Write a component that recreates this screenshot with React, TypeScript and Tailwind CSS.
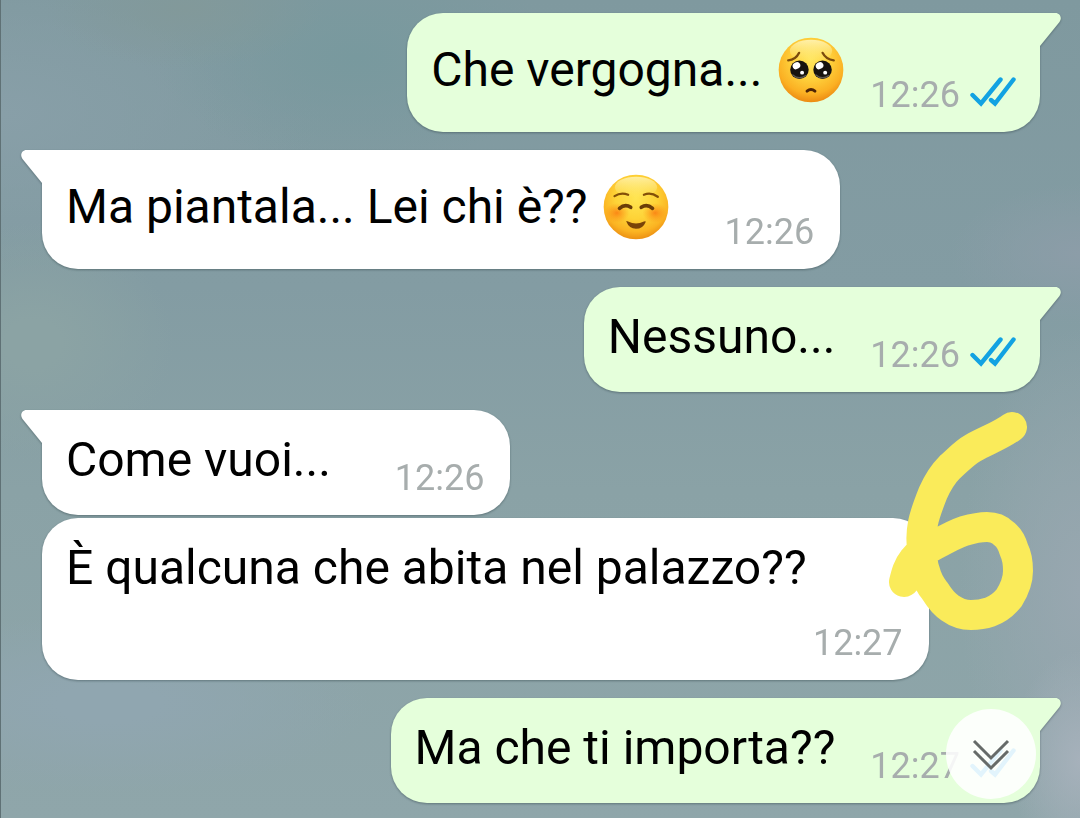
import type { ReactNode } from "react";

type Side = "in" | "out";

function PleadingFace() {
  return (
    <svg viewBox="0 0 200 200" className="size-[66px] shrink-0" role="img" aria-label="Pleading face">
      <defs>
        <radialGradient id="plead" cx="0.5" cy="0.34" r="0.66">
          <stop offset="0" stopColor="#ffe55c" />
          <stop offset="0.45" stopColor="#fed13c" />
          <stop offset="0.8" stopColor="#fbb023" />
          <stop offset="1" stopColor="#ec8a12" />
        </radialGradient>
        <linearGradient id="pleadTop" x1="0" y1="0" x2="0" y2="1">
          <stop offset="0" stopColor="#fffbd0" stopOpacity="0.75" />
          <stop offset="1" stopColor="#fff7a0" stopOpacity="0" />
        </linearGradient>
      </defs>
      <circle cx="100" cy="100" r="98" fill="url(#plead)" />
      <ellipse cx="100" cy="42" rx="64" ry="34" fill="url(#pleadTop)" />
      <path d="M31 71Q54 69 64 48M135 48Q145 68 169 71" fill="none" stroke="#7a4a0c" strokeWidth="7" strokeLinecap="round" />
      <g fill="#17130f">
        <circle cx="65" cy="99" r="28" />
        <circle cx="135" cy="99" r="28" />
      </g>
      <path d="M45 115Q63 131 84 117M115 115Q133 131 154 117" fill="none" stroke="#5c5751" strokeWidth="4" strokeLinecap="round" />
      <g fill="#fff">
        <ellipse cx="56" cy="87" rx="12" ry="10" transform="rotate(-30 56 87)" />
        <ellipse cx="126" cy="87" rx="12" ry="10" transform="rotate(-30 126 87)" />
        <circle cx="73" cy="108" r="6" />
        <circle cx="143" cy="108" r="6" />
      </g>
      <path d="M88 164Q100 154 112 164" fill="none" stroke="#4e2406" strokeWidth="9" strokeLinecap="round" />
    </svg>
  );
}

function SmilingFace() {
  return (
    <svg viewBox="0 0 200 200" className="size-[66px] shrink-0" role="img" aria-label="Smiling face">
      <defs>
        <radialGradient id="smile" cx="0.5" cy="0.36" r="0.64">
          <stop offset="0" stopColor="#ffe552" />
          <stop offset="0.5" stopColor="#fed337" />
          <stop offset="0.82" stopColor="#fbb322" />
          <stop offset="1" stopColor="#ec9013" />
        </radialGradient>
        <radialGradient id="blush">
          <stop offset="0" stopColor="#fa780f" stopOpacity="0.8" />
          <stop offset="1" stopColor="#fb8d12" stopOpacity="0" />
        </radialGradient>
        <linearGradient id="smileTop" x1="0" y1="0" x2="0" y2="1">
          <stop offset="0" stopColor="#fffbd0" stopOpacity="0.7" />
          <stop offset="1" stopColor="#fff7a0" stopOpacity="0" />
        </linearGradient>
      </defs>
      <circle cx="100" cy="100" r="98" fill="url(#smile)" />
      <ellipse cx="100" cy="40" rx="64" ry="32" fill="url(#smileTop)" />
      <ellipse cx="42" cy="118" rx="38" ry="30" fill="url(#blush)" />
      <ellipse cx="158" cy="118" rx="38" ry="30" fill="url(#blush)" />
      <path d="M35 67Q55 54 76 63M124 63Q145 54 166 69" fill="none" stroke="#845008" strokeWidth="7" strokeLinecap="round" />
      <path d="M50 104Q67 89 84 101M116 101Q133 89 150 104" fill="none" stroke="#6b3d08" strokeWidth="11" strokeLinecap="round" />
      <path d="M71 145Q69 141 76 144Q100 156 124 144Q131 141 129 146Q121 166 100 166Q79 166 71 145Z" fill="#7a4308" />
    </svg>
  );
}

function Ticks() {
  return (
    <svg viewBox="0 0 46 30" className="mb-[9px] ml-[10px] h-[30px] w-[46px]" role="img" aria-label="Read">
      <path d="M2.500 18L11 26.500L30.500 2.500M21 23L25 26.500L43.500 2.500" fill="none" stroke="#12a2e2" strokeWidth="4.4" strokeLinejoin="miter" strokeLinecap="round" />
    </svg>
  );
}

function Tail({ side }: { side: Side }) {
  return side === "out" ? (
    <svg viewBox="0 0 22 34" className="absolute top-0 left-full -ml-px h-[34px] w-[22px]" aria-hidden="true">
      <path d="M0 0H16.500C21 0 23.500 5 20.500 9L1 33V34H0Z" fill="#e5ffdb" />
    </svg>
  ) : (
    <svg viewBox="0 0 22 34" className="absolute top-0 right-full -mr-px h-[34px] w-[22px]" aria-hidden="true">
      <path d="M22 0H5.500C1 0 -1.500 5 1.500 9L21 33V34H22Z" fill="#ffffff" />
    </svg>
  );
}

type MessageProps = {
  side: Side;
  time: string;
  text: string;
  emoji?: ReactNode;
  tail?: boolean;
  stacked?: boolean;
};

function Message({ side, time, text, emoji, tail = true, stacked = false }: MessageProps) {
  const out = side === "out";
  const spacing = tail ? "mt-[18px]" : "mt-[3px]";
  const shape = out
    ? "self-end rounded-tr-none bg-[#e5ffdb] pr-6"
    : `self-start bg-white pr-[26px] ${tail ? "rounded-tl-none" : ""}`;
  const flow = stacked ? "flex-col gap-[26px]" : out ? "gap-[35px]" : "gap-16";
  return (
    <li className={`relative flex rounded-[36px] pl-6 drop-shadow-[0_1px_1px_rgba(40,60,65,0.45)] first:mt-0 ${spacing} ${shape} ${flow}`}>
      {tail && <Tail side={side} />}
      <div className={`flex items-center pt-[22px] ${stacked ? "pr-[96px]" : "pb-[27px]"}`}>
        <p className="text-[48px] leading-[56px] whitespace-nowrap text-black">{text}</p>
        {emoji && <span className="-mr-[9px] ml-4 flex h-[70px] items-center">{emoji}</span>}
      </div>
      <div className="flex items-end self-end pb-4">
        <time className="text-[36px] leading-[42px] text-[#a7adad]">{time}</time>
        {out && <Ticks />}
      </div>
    </li>
  );
}

export default function App() {
  return (
    <main className="relative min-h-screen overflow-hidden border-l border-[#5f7175] bg-[#869fa5] bg-[radial-gradient(ellipse_70px_110px_at_100%_93%,#a6b1bb_0%,transparent_100%),radial-gradient(ellipse_120px_260px_at_100%_72%,#98a7b0_0%,transparent_100%),radial-gradient(ellipse_130px_70px_at_100%_31%,#8c9da8_0%,transparent_100%),radial-gradient(ellipse_140px_60px_at_17%_1%,#82999a_0%,transparent_100%),radial-gradient(ellipse_200px_110px_at_33%_7%,#78999e_0%,transparent_100%),radial-gradient(ellipse_140px_120px_at_3%_42%,#8ba3a4_20%,transparent_100%),radial-gradient(ellipse_260px_90px_at_10%_86%,#90a6b0_20%,transparent_100%),radial-gradient(ellipse_320px_160px_at_0%_14%,#889fa8_0%,transparent_100%),linear-gradient(180deg,#7f999f_0%,#839ca3_35%,#8aa2a6_60%,#8fa6aa_100%)] pt-[13px] pr-10 pb-[15px] pl-[41px] font-[Roboto,sans-serif]">
      <ul className="flex flex-col">
        <Message side="out" time="12:26" text="Che vergogna..." emoji={<PleadingFace />} />
        <Message side="in" time="12:26" text="Ma piantala... Lei chi è??" emoji={<SmilingFace />} />
        <Message side="out" time="12:26" text="Nessuno..." />
        <Message side="in" time="12:26" text="Come vuoi..." />
        <Message side="in" time="12:27" text="È qualcuna che abita nel palazzo??" tail={false} stacked />
        <Message side="out" time="12:27" text="Ma che ti importa??" />
      </ul>

      <svg viewBox="888 410 148 222" className="pointer-events-none absolute top-[410px] right-[44px] h-[222px] w-[148px]" aria-hidden="true">
        <path
          d="M1012 427C1000 436 985 441 973 448C964 453 957 461 950 467C942 475 937 484 933 493C929 503 925 513 923 523C921 533 921 540 922 547C922 556 922 563 925 571C927 579 930 585 935 591C940 599 944 604 950 608C957 613 964 615 971 615C978 615 984 614 990 612C998 609 1004 604 1009 598C1014 590 1018 582 1018 571C1018 563 1017 556 1014 550C1012 543 1009 537 1003 533C998 528 993 527 987 527C979 527 971 529 964 531C955 534 946 539 937 544C928 549 919 552 913 560C908 566 906 574 904 582"
          fill="none"
          stroke="#faeb5a"
          strokeWidth="30"
          strokeLinecap="round"
          strokeLinejoin="round"
        />
      </svg>

      <button type="button" aria-label="Scroll to latest" className="absolute right-[44px] bottom-[19px] flex size-[90px] items-center justify-center rounded-full bg-white/88">
        <svg viewBox="0 0 40 34" className="h-[34px] w-10" aria-hidden="true">
          <path d="M3 4L20 21L37 4M3 14L20 31L37 14" fill="none" stroke="#666b69" strokeWidth="3" />
        </svg>
      </button>
    </main>
  );
}
